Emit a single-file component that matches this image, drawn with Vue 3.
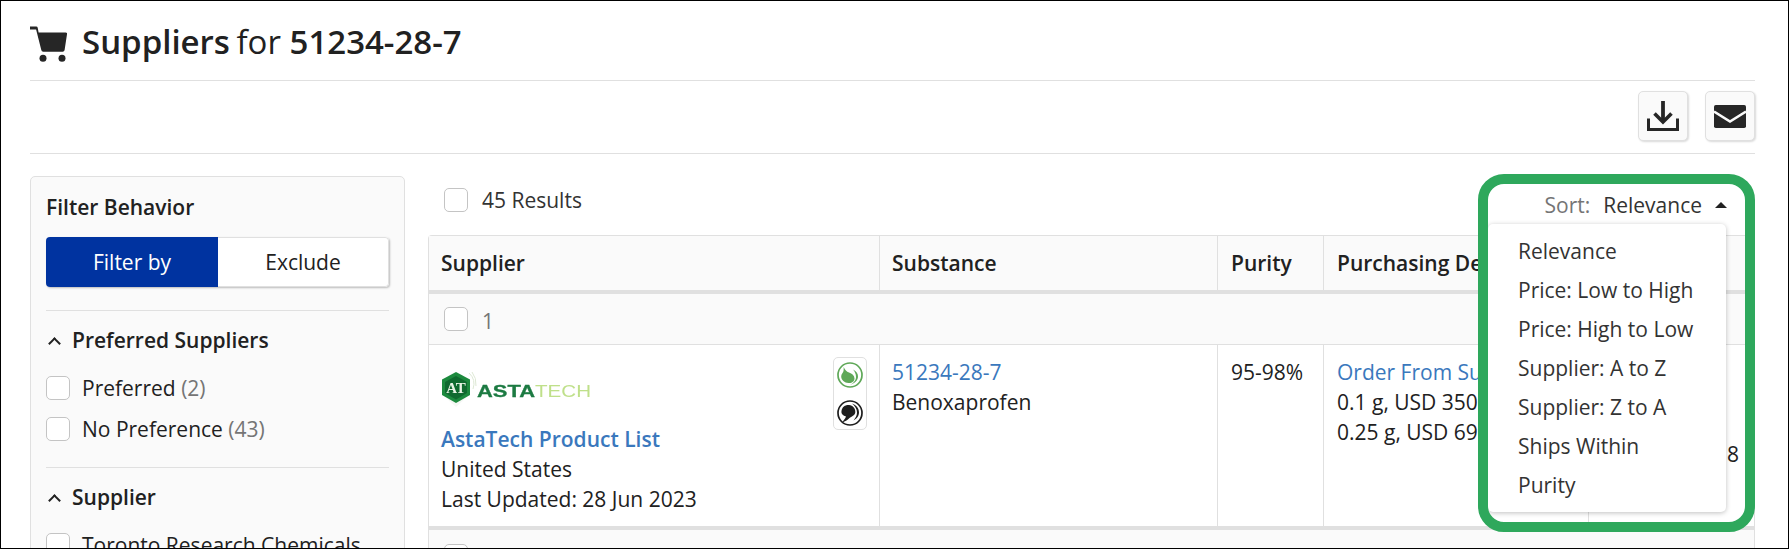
<script setup>
const sortOptions = ['Relevance', 'Price: Low to High', 'Price: High to Low', 'Supplier: A to Z', 'Supplier: Z to A', 'Ships Within', 'Purity']
const filters = [
  { label: 'Preferred', count: '(2)' },
  { label: 'No Preference', count: '(43)' }
]
</script>

<template>
  <div class="page">
    <header class="title-row">
      <svg class="cart" viewBox="0 0 37 36" aria-hidden="true">
        <path d="M0 .5h6.200a1.500 1.500 0 0 1 1.500 1.200L8.600 6.500H35.500a1.500 1.500 0 0 1 1.500 1.800L34.600 24a2 2 0 0 1-2 1.700H13.300a2 2 0 0 1-2-1.700L6.100 3.500H0z" fill="#262626" />
        <circle cx="13" cy="32.300" r="3.500" fill="#262626" />
        <circle cx="32" cy="32.300" r="3.500" fill="#262626" />
      </svg>
      <h1><b>Suppliers</b> <span class="for">for</span> <b>51234-28-7</b></h1>
    </header>

    <div class="actions">
      <button class="icon-btn" aria-label="Download">
        <svg viewBox="0 0 32 30" width="32" height="30" aria-hidden="true">
          <path d="M16 0v20" fill="none" stroke="#262626" stroke-width="3.800" />
          <path d="M7.500 12.500 16 21l8.500-8.500" fill="none" stroke="#262626" stroke-width="3.600" />
          <path d="M1.500 17.500v11h29v-11" fill="none" stroke="#262626" stroke-width="3" />
        </svg>
      </button>
      <button class="icon-btn" aria-label="Email">
        <svg viewBox="0 0 32 23" width="32" height="23" aria-hidden="true">
          <rect width="32" height="23" rx="1.800" fill="#262626" />
          <path d="M0 6.500 16 16.500 32 6.500" fill="none" stroke="#fafafa" stroke-width="2.600" />
        </svg>
      </button>
    </div>

    <div class="content">
      <aside class="filters">
        <h2>Filter Behavior</h2>
        <div class="toggle">
          <span class="toggle-on">Filter by</span>
          <span class="toggle-off">Exclude</span>
        </div>
        <section class="filter-group">
          <h3><span class="chev"></span>Preferred Suppliers</h3>
          <label v-for="f in filters" :key="f.label" class="check-row">
            <span class="box"></span>
            <span>{{ f.label }} <span class="count">{{ f.count }}</span></span>
          </label>
        </section>
        <section class="filter-group">
          <h3><span class="chev"></span>Supplier</h3>
          <label class="check-row">
            <span class="box"></span>
            <span>Toronto Research Chemicals</span>
          </label>
        </section>
      </aside>

      <main class="results">
        <div class="results-bar">
          <span class="box"></span>
          <span class="results-count">45 Results</span>
          <div class="sort">
            <span class="sort-label">Sort:</span>
            <span class="sort-value">Relevance</span>
            <span class="caret"></span>
            <ul class="menu">
              <li v-for="o in sortOptions" :key="o">{{ o }}</li>
            </ul>
          </div>
        </div>

        <div class="table">
          <div class="row head">
            <div class="cell c1">Supplier</div>
            <div class="cell c2">Substance</div>
            <div class="cell c3">Purity</div>
            <div class="cell c4"><div class="clip">Purchasing Details</div></div>
            <div class="cell c5"></div>
          </div>
          <div class="group">
            <span class="box"></span>
            <span class="group-num">1</span>
          </div>
          <div class="row body">
            <div class="cell c1 supplier">
              <svg class="logo" viewBox="0 0 150 36" width="150" height="36" aria-hidden="true">
                <path d="M14 4 26 9.500V24L14 35 2 24V9.500z" fill="#eef2ec" opacity=".6" />
                <path d="M14 0 28 7.500V23L14 31 0 23V7.500z" fill="#1c8a3e" />
                <path d="M14 4 25 10v11L14 27.500 3 21V10z" fill="#0f6a2f" />
                <path d="M27 1a15 15 0 0 1 4 16M30 0a20 20 0 0 1 4 14" fill="none" stroke="#dde8d4" stroke-width="1" />
                <text x="14" y="21" text-anchor="middle" class="logo-at">AT</text>
                <text x="35" y="25" textLength="58" lengthAdjust="spacingAndGlyphs" class="logo-asta">ASTA</text>
                <text x="93" y="25" textLength="56" lengthAdjust="spacingAndGlyphs" class="logo-tech">TECH</text>
              </svg>
              <a class="supplier-link">AstaTech Product List</a>
              <div>United States</div>
              <div>Last Updated: 28 Jun 2023</div>
              <div class="badges">
                <svg viewBox="0 0 26 26" width="26" height="26" aria-hidden="true">
                  <circle cx="13" cy="13" r="12" fill="none" stroke="#5fa858" stroke-width="1.700" />
                  <path d="M6.700 5C8 8 9.500 9.500 12 10.500c3 1 5.500 3 5.500 6s-3 5-6 4.500c-4-.2-7.300-3-7.300-6.500 0-2.500 2-3.500 2.300-5.500.2-1 .2-3 .2-4z" fill="#5fa858" />
                  <path d="M16 7.500c3.500 1.500 5.300 4.500 5 7.500-.3 3.500-3.500 6.500-8 8 3.500-2 6-4.500 6-8 0-3-1.200-5.500-3-7.500z" fill="#5fa858" />
                </svg>
                <svg viewBox="0 0 26 26" width="26" height="26" aria-hidden="true">
                  <circle cx="13" cy="13" r="12" fill="none" stroke="#1e1e1e" stroke-width="1.700" />
                  <path d="M4.500 11c.5-4.500 4.500-6.500 7.500-6 4 .5 6.700 3.500 6.300 7.500-.4 3-4 4-5.800 5.500-2 2-4.500 3.500-8 5 2-2.500 4-4.500 4.500-6.500C6 15.500 4 14 4.500 11z" fill="#1e1e1e" />
                  <path d="M15 3.500c4.500 1.500 7 5 7 9 0 3.500-2.500 6.500-5.500 8 2-2.500 3.500-5 3.500-8 0-3.500-2-6.500-5-9z" fill="#1e1e1e" />
                </svg>
              </div>
            </div>
            <div class="cell c2">
              <a class="link">51234-28-7</a>
              <div>Benoxaprofen</div>
            </div>
            <div class="cell c3">95-98%</div>
            <div class="cell c4">
              <a class="link clip">Order From Supplier</a>
              <div class="clip">0.1 g, USD 350.00</div>
              <div class="clip">0.25 g, USD 690.00</div>
            </div>
            <div class="cell c5 ships">8</div>
          </div>
          <div class="group last">
            <span class="box"></span>
          </div>
        </div>
      </main>
    </div>

    <div class="highlight"></div>
  </div>
</template>

<style scoped>
.page {
  position: relative;
  box-sizing: border-box;
  width: 1789px;
  height: 549px;
  border: 1px solid #000;
  overflow: hidden;
  padding: 0 33px 0 29px;
  background: #fff;
  color: #212121;
  font-family: "Open Sans", sans-serif;
  font-size: 21px;
  line-height: 30px;
}
.title-row {
  display: flex;
  align-items: center;
  box-sizing: border-box;
  height: 80px;
  padding-top: 7px;
  gap: 15px;
  border-bottom: 1px solid #e0e0e0;
}
.cart {
  width: 37px;
  height: 36px;
  flex: none;
}
h1 {
  margin: 0 0 4px;
  font-size: 33px;
  line-height: 44px;
  font-weight: 400;
  color: #212121;
}
h1 b {
  font-weight: 600;
}
.for {
  margin-left: -2px;
}
.actions {
  display: flex;
  justify-content: flex-end;
  gap: 17px;
  height: 73px;
  padding-top: 10px;
  box-sizing: border-box;
  border-bottom: 1px solid #e0e0e0;
}
.icon-btn {
  display: flex;
  align-items: center;
  justify-content: center;
  box-sizing: border-box;
  width: 50px;
  height: 50px;
  padding: 0;
  background: #fafafa;
  border: 1px solid #e0e0e0;
  border-radius: 5px;
  box-shadow: 1px 1px 2px rgba(0, 0, 0, 0.15);
}
.content {
  display: flex;
  align-items: flex-start;
  gap: 23px;
  padding-top: 22px;
}
.filters {
  box-sizing: border-box;
  width: 375px;
  height: 400px;
  flex: none;
  padding: 15px 15px 0;
  background: #fafafa;
  border: 1px solid #e0e0e0;
  border-radius: 5px;
}
h2 {
  margin: 0 0 15px;
  font-size: 21px;
  line-height: 30px;
  font-weight: 600;
}
.toggle {
  display: flex;
  height: 50px;
  border-radius: 4px;
  background: #fff;
  box-shadow: 1px 1px 2px rgba(0, 0, 0, 0.25);
  line-height: 50px;
  text-align: center;
  overflow: hidden;
}
.toggle-on {
  width: 172px;
  background: #0033a0;
  color: #fff;
}
.toggle-off {
  flex: 1;
  border: 1px solid #e0e0e0;
  border-left: 0;
  line-height: 48px;
  border-radius: 0 4px 4px 0;
}
.filter-group {
  margin-top: 23px;
  border-top: 1px solid #e0e0e0;
  padding-top: 14px;
}
.filter-group + .filter-group {
  margin-top: 23px;
}
h3 {
  display: flex;
  align-items: center;
  margin: 0 0 18px;
  font-size: 21px;
  line-height: 30px;
  font-weight: 600;
}
.chev {
  width: 7px;
  height: 7px;
  margin: 6px 13px 0 4px;
  border-top: 2px solid #212121;
  border-left: 2px solid #212121;
  transform: rotate(45deg);
}
.check-row {
  display: flex;
  align-items: center;
  gap: 12px;
  height: 30px;
  margin-bottom: 11px;
  white-space: nowrap;
}
.count {
  color: #757575;
}
.box {
  display: block;
  box-sizing: border-box;
  flex: none;
  width: 24px;
  height: 24px;
  background: #fff;
  border: 1px solid #c4c4c4;
  border-radius: 5px;
}
.results {
  flex: 1;
  min-width: 0;
}
.results-bar {
  display: flex;
  align-items: center;
  height: 48px;
  padding: 0 0 0 16px;
  position: relative;
}
.results-count {
  margin-left: 14px;
  color: #333;
}
.sort {
  position: absolute;
  right: 28px;
  top: 14px;
  display: flex;
  align-items: center;
  white-space: nowrap;
}
.sort-label {
  color: #757575;
}
.sort-value {
  margin-left: 13px;
  color: #333;
}
.caret {
  margin-left: 13px;
  border-left: 6px solid transparent;
  border-right: 6px solid transparent;
  border-bottom: 6px solid #212121;
}
.menu {
  position: absolute;
  z-index: 2;
  top: 34px;
  right: 1px;
  box-sizing: border-box;
  width: 238px;
  height: 288px;
  margin: 0;
  padding: 8px 0 0 30px;
  list-style: none;
  background: #fff;
  border-radius: 5px;
  box-shadow: 0 1px 5px rgba(0, 0, 0, 0.25);
  color: #333;
}
.menu li {
  height: 39px;
  line-height: 39px;
}
.table {
  margin-top: 11px;
  border: 1px solid #e0e0e0;
  border-bottom: 0;
  border-radius: 4px 4px 0 0;
}
.row {
  display: flex;
}
.cell {
  box-sizing: border-box;
  padding: 0 12px;
  border-right: 1px solid #e0e0e0;
}
.cell:last-child {
  border-right: 0;
}
.c1 { width: 451px; }
.c2 { width: 338px; }
.c3 { width: 106px; padding: 0 13px; }
.c4 { width: 265px; padding: 0 13px; }
.c5 { flex: 1; }
.clip {
  display: block;
  width: 145px;
  overflow: hidden;
}
.head {
  height: 54px;
  background: #fafafa;
  border-bottom: 4px solid #e0e0e0;
  box-sizing: content-box;
  font-weight: 600;
  line-height: 54px;
  white-space: nowrap;
}
.group {
  display: flex;
  align-items: center;
  gap: 14px;
  box-sizing: border-box;
  height: 51px;
  padding: 0 15px;
  background: #fafafa;
  border-bottom: 1px solid #e0e0e0;
}
.group.last {
  border-bottom: 0;
  align-items: flex-start;
  padding-top: 14px;
}
.group-num {
  padding-top: 4px;
  color: #757575;
}
.body {
  height: 181px;
  border-bottom: 4px solid #e0e0e0;
  box-sizing: content-box;
}
.body .cell {
  padding-top: 12px;
  white-space: nowrap;
}
.body .supplier {
  position: relative;
  padding-top: 0;
}
.logo {
  display: block;
  margin: 27px 0 16px 1px;
  filter: blur(0.35px);
}
.logo-at {
  font: 700 15px "Liberation Serif", serif;
  fill: #e8f3e4;
}
.logo-asta {
  font: 700 16px "Liberation Sans", sans-serif;
  fill: #1c7a42;
  stroke: #1c7a42;
  stroke-width: 0.3px;
}
.logo-tech {
  font: 400 16px "Liberation Sans", sans-serif;
  fill: #bfe08a;
}
.supplier-link {
  display: block;
  color: #3a78bd;
  font-weight: 600;
}
.link {
  display: block;
  color: #3a78bd;
}
.badges {
  position: absolute;
  top: 12px;
  right: 12px;
  display: flex;
  flex-direction: column;
  align-items: center;
  gap: 12px;
  box-sizing: border-box;
  width: 34px;
  height: 73px;
  padding-top: 4px;
  border: 1px solid #e0e0e0;
  border-radius: 5px;
}
.body .ships {
  padding-top: 94px;
  padding-left: 138px;
}
.highlight {
  position: absolute;
  left: 1477px;
  top: 173px;
  width: 277px;
  height: 358px;
  box-sizing: border-box;
  border: 10px solid #2ea85c;
  border-radius: 26px;
  z-index: 3;
  pointer-events: none;
}
</style>

<style>
html, body {
  margin: 0;
  background: #fff;
  overflow: hidden;
}
</style>
